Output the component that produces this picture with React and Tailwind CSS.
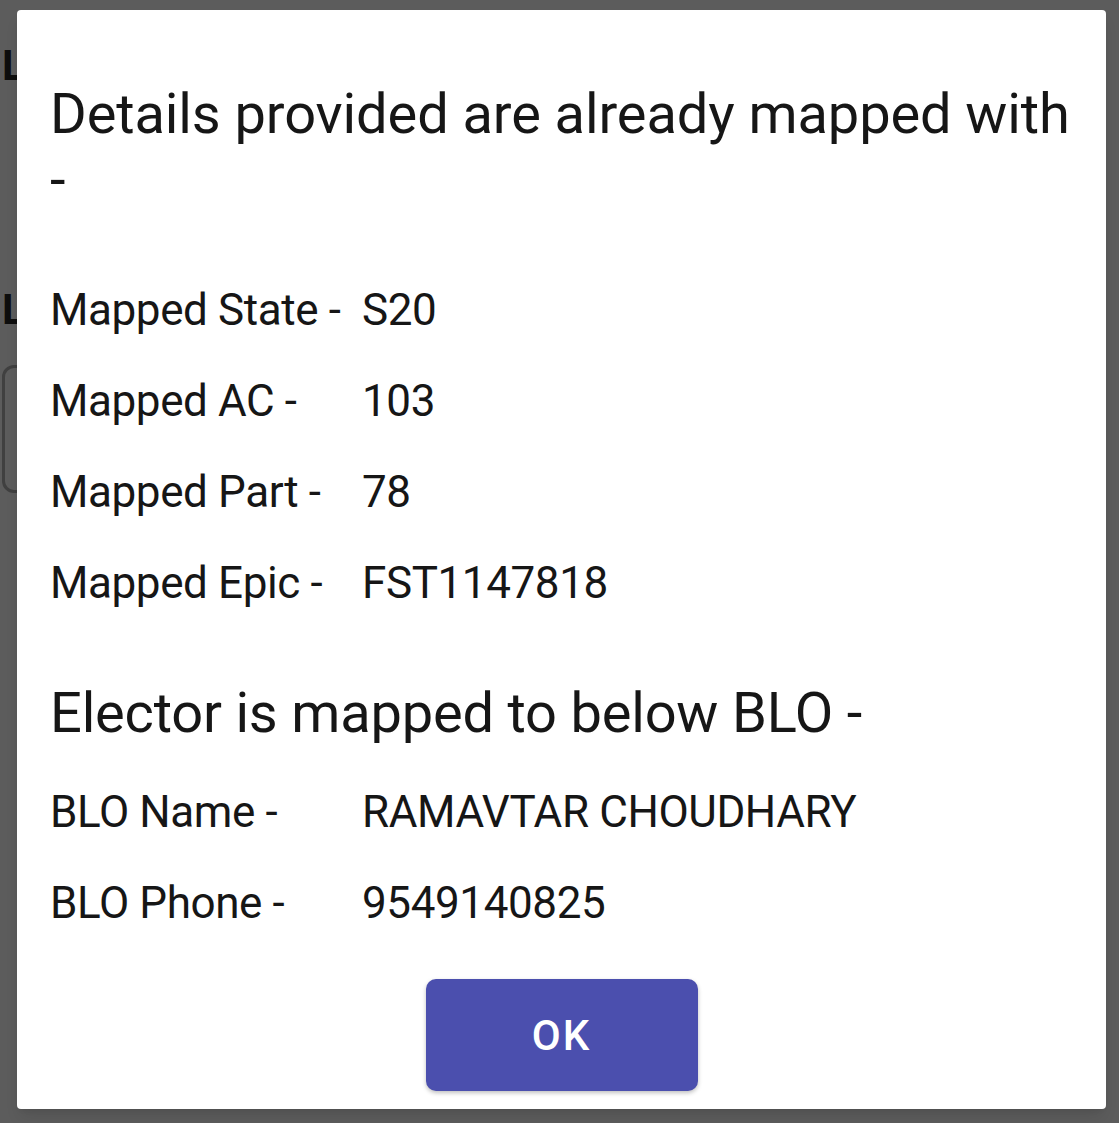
export default function App() {
  const rows1 = [
    ["Mapped State -", "S20"],
    ["Mapped AC -", "103"],
    ["Mapped Part -", "78"],
    ["Mapped Epic -", "FST1147818"],
  ];
  const rows2 = [
    ["BLO Name -", "RAMAVTAR CHOUDHARY"],
    ["BLO Phone -", "9549140825"],
  ];
  return (
    <div
      className="relative w-[1119px] h-[1123px] overflow-hidden bg-[#5c5c5c]"
      style={{ fontFamily: "Roboto, 'Noto Sans', sans-serif" }}
    >
      {/* page behind the dim layer */}
      <div className="flex flex-col pl-[2px]">
        <div className="mt-[44px] text-[42px] font-bold leading-[44px] text-[#0e0e0e]">L</div>
        <div className="mt-[200px] text-[42px] font-bold leading-[44px] text-[#0e0e0e]">L</div>
        <div className="mt-[33px] w-[300px] h-[128px] rounded-[12px] border-[3px] border-[#404040]"></div>
      </div>

      {/* dialog */}
      <div className="absolute left-[17px] top-[10px] w-[1089px] h-[1099px] bg-white rounded-[4px] shadow-lg flex flex-col pl-[33px] pt-[71px] text-[#161616]">
        <div className="text-[56px] leading-[66px] whitespace-nowrap tracking-[-0.1px]">
          Details provided are already mapped with
          <br />-
        </div>
        <div className="mt-[52px] flex flex-col">
          {rows1.map(([k, v]) => (
            <div key={k} className="flex text-[44px] leading-[91px] whitespace-nowrap tracking-[-0.4px]">
              <span className="w-[312px]">{k}</span>
              <span>{v}</span>
            </div>
          ))}
        </div>
        <div className="mt-[51px] text-[56px] leading-[66px] whitespace-nowrap tracking-[-0.2px]">
          Elector is mapped to below BLO -
        </div>
        <div className="mt-[21px] flex flex-col">
          {rows2.map(([k, v]) => (
            <div key={k} className="flex text-[44px] leading-[91px] whitespace-nowrap tracking-[-0.4px]">
              <span className="w-[312px]">{k}</span>
              <span>{v}</span>
            </div>
          ))}
        </div>
        <div className="mt-[30px] flex justify-center pr-[33px]">
          <button className="w-[272px] h-[112px] rounded-[10px] bg-[#4b4fae] text-white text-[42px] font-medium tracking-[2px] shadow-[0_2px_4px_rgba(0,0,0,0.25)]">
            OK
          </button>
        </div>
      </div>
    </div>
  );
}
